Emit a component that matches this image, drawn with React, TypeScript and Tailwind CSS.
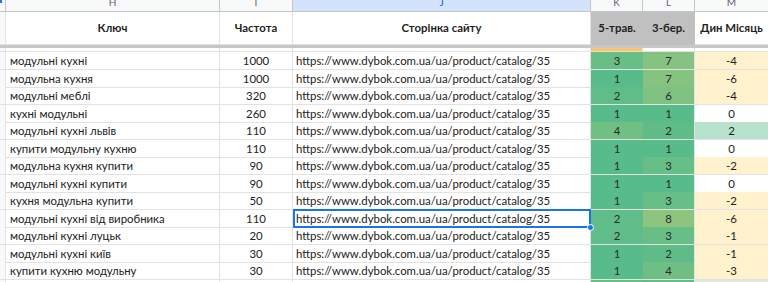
import React from "react";

const GRID = "grid grid-cols-[6px_214px_73px_298px_52px_52px_74px_40px] w-[809px]";

type Row = {
  key: string;
  freq: string;
  k: string;
  l: string;
  m: string;
  kc: string;
  lc: string;
  mc: string;
};

const rows: Row[] = [
  { key: "модульні кухні", freq: "1000", k: "3", l: "7", m: "-4", kc: "bg-[#69be86]", lc: "bg-[#87c380]", mc: "bg-[#fff2cc]" },
  { key: "модульна кухня", freq: "1000", k: "1", l: "7", m: "-6", kc: "bg-[#57bb8a]", lc: "bg-[#87c380]", mc: "bg-[#fff2cc]" },
  { key: "модульні меблі", freq: "320", k: "2", l: "6", m: "-4", kc: "bg-[#60bc88]", lc: "bg-[#7fc181]", mc: "bg-[#fff2cc]" },
  { key: "кухні модульні", freq: "260", k: "1", l: "1", m: "0", kc: "bg-[#57bb8a]", lc: "bg-[#57bb8a]", mc: "bg-white" },
  { key: "модульні кухні львів", freq: "110", k: "4", l: "2", m: "2", kc: "bg-[#72bf84]", lc: "bg-[#5fbc88]", mc: "bg-[#b7e1cd]" },
  { key: "купити модульну кухню", freq: "110", k: "1", l: "1", m: "0", kc: "bg-[#57bb8a]", lc: "bg-[#57bb8a]", mc: "bg-white" },
  { key: "модульна кухня купити", freq: "90", k: "1", l: "3", m: "-2", kc: "bg-[#57bb8a]", lc: "bg-[#67be87]", mc: "bg-[#fff2cc]" },
  { key: "модульні кухні купити", freq: "90", k: "1", l: "1", m: "0", kc: "bg-[#57bb8a]", lc: "bg-[#57bb8a]", mc: "bg-white" },
  { key: "кухня модульна купити", freq: "50", k: "1", l: "3", m: "-2", kc: "bg-[#57bb8a]", lc: "bg-[#67be87]", mc: "bg-[#fff2cc]" },
  { key: "модульні кухні від виробника", freq: "110", k: "2", l: "8", m: "-6", kc: "bg-[#60bc88]", lc: "bg-[#8fc47e]", mc: "bg-[#fff2cc]" },
  { key: "модульні кухні луцьк", freq: "20", k: "2", l: "3", m: "-1", kc: "bg-[#60bc88]", lc: "bg-[#67be87]", mc: "bg-[#fff2cc]" },
  { key: "модульні кухні київ", freq: "30", k: "1", l: "2", m: "-1", kc: "bg-[#57bb8a]", lc: "bg-[#5fbc88]", mc: "bg-[#fff2cc]" },
  { key: "купити кухню модульну", freq: "30", k: "1", l: "4", m: "-3", kc: "bg-[#57bb8a]", lc: "bg-[#6fbf85]", mc: "bg-[#fff2cc]" },
  { key: "", freq: "", k: "", l: "", m: "", kc: "bg-[#69be86]", lc: "bg-[#60bc88]", mc: "bg-[#d9eadf]" },
];

const URL = "https://www.dybok.com.ua/ua/product/catalog/35";

const cell = "border-r border-b border-[#e2e2e2] overflow-hidden whitespace-nowrap";

export default function App() {
  return (
    <div
      className="w-[768px] h-[282px] overflow-hidden bg-white text-[#222222]"
      style={{ fontFamily: "Lato, 'Open Sans', sans-serif" }}
    >
      {/* Column letters */}
      <div className={`${GRID} h-[12px] bg-[#f8f9fa] text-[10px] text-[#5f6368]`}>
        <div className="border-r border-b border-[#c4c7c5] bg-[#f8f9fa] relative">
          <div className="absolute left-0 top-0 w-[2px] h-[3px] bg-[#1a73e8]" />
        </div>
        {["H", "I", "J", "K", "L", "M", ""].map((c, i) => (
          <div
            key={i}
            className={`border-r border-b border-[#c4c7c5] overflow-hidden flex justify-center ${
              c === "J" ? "bg-[#d3e3fd] text-[#0b57d0]" : ""
            }`}
          >
            <span className="leading-[10px] mt-[-3px]">{c}</span>
          </div>
        ))}
      </div>

      {/* Header row */}
      <div className={`${GRID} h-[33px] text-[11.4px] font-bold text-[#1f1f1f]`}>
        <div className="border-r border-b border-[#e2e2e2] bg-[#f8f9fa]" />
        <div className={`${cell} flex items-center justify-center`}>Ключ</div>
        <div className={`${cell} flex items-center justify-center`}>Частота</div>
        <div className={`${cell} flex items-center justify-center`}>Сторінка сайту</div>
        <div className="border-b border-[#c0c0c0] bg-[#c0c0c0] flex items-center justify-center whitespace-nowrap">5-трав.</div>
        <div className="border-r border-b border-[#c0c0c0] bg-[#c0c0c0] flex items-center justify-center whitespace-nowrap">3-бер.</div>
        <div className={`${cell} flex items-center justify-center`}>Дин Місяць</div>
        <div className={cell} />
      </div>

      {/* Frozen divider */}
      <div className="h-[3px] w-full bg-[#c7c7c7]" />

      {/* Partial row */}
      <div className={`${GRID} h-[4px]`}>
        <div className="border-r border-b border-[#e2e2e2] bg-[#f8f9fa]" />
        <div className={cell} />
        <div className={cell} />
        <div className={cell} />
        <div className="border-r border-b border-[#e2e2e2] bg-[#f8c56c]" />
        <div className={`${cell} bg-white`} />
        <div className={`${cell} bg-white`} />
        <div className={cell} />
      </div>

      {/* Data rows */}
      {rows.map((r, i) => (
        <div key={i} className={`${GRID} h-[17.5px] text-[11.4px] leading-[16px]`}>
          <div className="border-r border-b border-[#e2e2e2] bg-[#f8f9fa]" />
          <div className={`${cell} pl-[4px] pt-[1px] flex items-center`}>{r.key}</div>
          <div className={`${cell} pt-[1px] flex items-center justify-center`}>{r.freq}</div>
          <div className={`${cell} pl-[3px] pt-[1px] flex items-center relative !overflow-visible`}>
            <span className="overflow-hidden">{r.key ? URL : ""}</span>
            {i === 9 && (
              <>
                <div className="absolute left-0 right-[-1px] top-[-1px] bottom-[-1px] border-2 border-[#1a73e8] z-10" />
                <div className="absolute right-[-4px] bottom-[-4px] w-[7px] h-[7px] rounded-full bg-[#1a73e8] border border-white z-20" />
              </>
            )}
          </div>
          <div className={`border-b border-[#e2e2e2] ${r.kc} pt-[1px] flex items-center justify-center text-[#2b2b2b]`}>{r.k}</div>
          <div className={`border-r border-b border-[#e2e2e2] ${r.lc} pt-[1px] flex items-center justify-center text-[#2b2b2b]`}>{r.l}</div>
          <div className={`${cell} ${r.mc} pt-[1px] flex items-center justify-center`}>{r.m}</div>
          <div className={cell} />
        </div>
      ))}
    </div>
  );
}
